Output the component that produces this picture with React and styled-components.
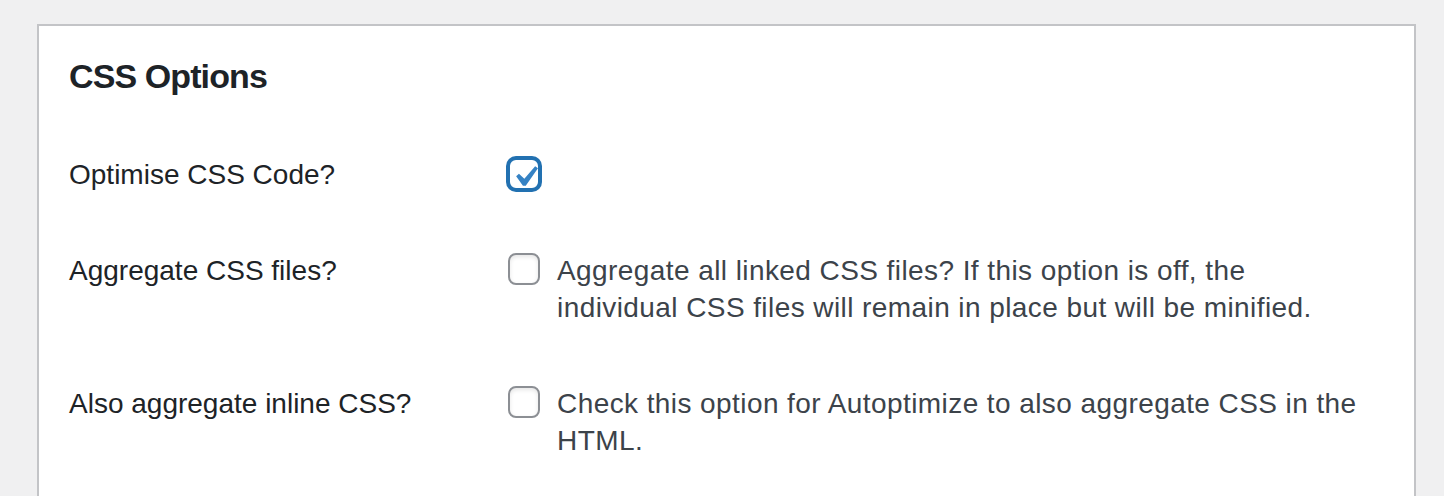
import React from "react";
import styled, { createGlobalStyle } from "styled-components";

const GlobalStyle = createGlobalStyle`
  html, body {
    margin: 0;
    padding: 0;
    background: #f0f0f1;
    height: 100%;
    overflow: hidden;
  }
  body {
    font-family: "Liberation Sans", Arial, sans-serif;
    color: #3c434a;
  }
`;

const Page = styled.div`
  padding: 24px 28px 0 37px;
  height: 496px;
  box-sizing: border-box;
`;

const Panel = styled.section`
  background: #fff;
  border: 2px solid #c3c4c7;
  border-bottom: none;
  padding: 28px 30px 0 30px;
  min-height: 600px;
  box-sizing: border-box;
`;

const Title = styled.h2`
  margin: 0 0 28px 0;
  font-size: 34px;
  line-height: 45px;
  font-weight: 700;
  letter-spacing: -0.9px;
  color: #1d2327;
`;

const OptionsTable = styled.div`
  display: grid;
  grid-template-columns: 439px 1fr;
`;

const Label = styled.div`
  padding: 30px 0;
  font-size: 28px;
  line-height: 36.4px;
  color: #1d2327;
`;

const Field = styled.div`
  padding: 30px 0;
  display: flex;
  align-items: flex-start;
  gap: 17px;
`;

const Box = styled.span`
  position: relative;
  flex: none;
  width: 32px;
  height: 32px;
  margin-top: ${(p) => p.$offset}px;
  box-sizing: border-box;
  border-radius: 8px;
  background: #fff;
  border: 2px solid ${(p) => (p.$checked ? "#2271b1" : "#8c8f94")};
  box-shadow: ${(p) =>
    p.$checked ? "0 0 0 2px #2271b1" : "inset 0 2px 4px rgba(0,0,0,0.1)"};
`;

const Tick = styled.svg`
  position: absolute;
  left: -6px;
  top: -4px;
  width: 42px;
  height: 42px;
`;

const Description = styled.div`
  max-width: 812px;
  font-size: 28px;
  line-height: 36.4px;
  letter-spacing: 0.42px;
  color: #3c434a;
`;

function Checkbox({ checked, offset }) {
  return (
    <Box role="checkbox" aria-checked={checked} $checked={checked} $offset={offset}>
      {checked && (
        <Tick viewBox="0 0 20 20" aria-hidden="true">
          <path
            d="M14.83 4.89l1.34.94-5.81 8.38H9.02L5.78 9.67l1.34-1.25 2.57 2.4z"
            fill="#3582c4"
          />
        </Tick>
      )}
    </Box>
  );
}

const options = [
  { label: "Optimise CSS Code?", checked: true, offset: 1 },
  {
    label: "Aggregate CSS files?",
    checked: false,
    offset: 0,
    text: "Aggregate all linked CSS files? If this option is off, the individual CSS files will remain in place but will be minified.",
  },
  {
    label: "Also aggregate inline CSS?",
    checked: false,
    offset: 0,
    text: "Check this option for Autoptimize to also aggregate CSS in the HTML.",
  },
];

export default function App() {
  return (
    <>
      <GlobalStyle />
      <Page>
        <Panel>
          <Title>CSS Options</Title>
          <OptionsTable>
            {options.map((o) => (
              <React.Fragment key={o.label}>
                <Label>{o.label}</Label>
                <Field>
                  <Checkbox checked={o.checked} offset={o.offset} />
                  {o.text && <Description>{o.text}</Description>}
                </Field>
              </React.Fragment>
            ))}
          </OptionsTable>
        </Panel>
      </Page>
    </>
  );
}
